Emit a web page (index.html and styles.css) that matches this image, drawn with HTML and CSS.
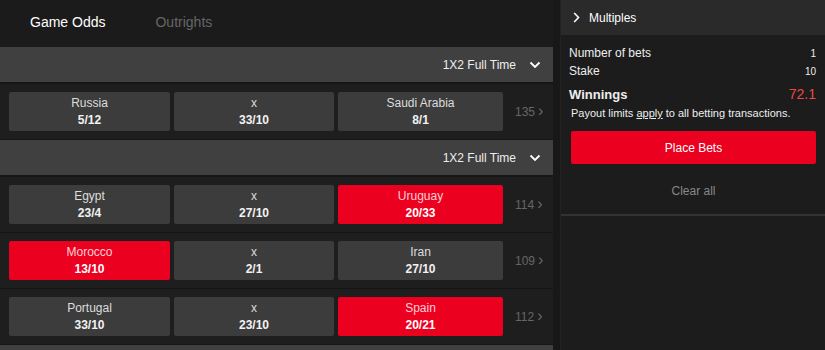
FILE: index.html
```html
<!DOCTYPE html>
<html lang="en">
<head>
    <meta charset="UTF-8">
    <title>Betting</title>
    <link rel="stylesheet" href="styles.css">
</head>
<body>
    <div class="page">
        <div class="markets">
            <div class="tabs">
                <span class="tab active">Game Odds</span>
                <span class="tab">Outrights</span>
            </div>

            <div class="section">
                <div class="section-head">
                    <span>1X2 Full Time</span>
                    <svg class="chev-down" width="12" height="8" viewBox="0 0 12 8"><path d="M1.5 1.5 L6 6 L10.5 1.5" fill="none" stroke="#fff" stroke-width="1.8"/></svg>
                </div>
                <div class="match">
                    <div class="odd"><span class="name">Russia</span><span class="price">5/12</span></div>
                    <div class="odd"><span class="name">x</span><span class="price">33/10</span></div>
                    <div class="odd"><span class="name">Saudi Arabia</span><span class="price">8/1</span></div>
                    <div class="more">135 <span class="arr">&rsaquo;</span></div>
                </div>
            </div>

            <div class="section">
                <div class="section-head">
                    <span>1X2 Full Time</span>
                    <svg class="chev-down" width="12" height="8" viewBox="0 0 12 8"><path d="M1.5 1.5 L6 6 L10.5 1.5" fill="none" stroke="#fff" stroke-width="1.8"/></svg>
                </div>
                <div class="match">
                    <div class="odd"><span class="name">Egypt</span><span class="price">23/4</span></div>
                    <div class="odd"><span class="name">x</span><span class="price">27/10</span></div>
                    <div class="odd selected"><span class="name">Uruguay</span><span class="price">20/33</span></div>
                    <div class="more">114 <span class="arr">&rsaquo;</span></div>
                </div>
                <div class="match">
                    <div class="odd selected"><span class="name">Morocco</span><span class="price">13/10</span></div>
                    <div class="odd"><span class="name">x</span><span class="price">2/1</span></div>
                    <div class="odd"><span class="name">Iran</span><span class="price">27/10</span></div>
                    <div class="more">109 <span class="arr">&rsaquo;</span></div>
                </div>
                <div class="match">
                    <div class="odd"><span class="name">Portugal</span><span class="price">33/10</span></div>
                    <div class="odd"><span class="name">x</span><span class="price">23/10</span></div>
                    <div class="odd selected"><span class="name">Spain</span><span class="price">20/21</span></div>
                    <div class="more">112 <span class="arr">&rsaquo;</span></div>
                </div>
            </div>

            <div class="section">
                <div class="section-head"></div>
            </div>
        </div>

        <div class="betslip">
            <div class="slip-head">
                <svg width="7" height="11" viewBox="0 0 7 11"><path d="M1.2 1 L5.5 5.5 L1.2 10" fill="none" stroke="#fff" stroke-width="1.6"/></svg>
                <span>Multiples</span>
            </div>
            <div class="slip-body">
                <div class="line"><span>Number of bets</span><span class="small">1</span></div>
                <div class="line"><span>Stake</span><span class="small">10</span></div>
                <div class="line win"><span>Winnings</span><span class="amount">72.1</span></div>
                <p class="note">Payout limits <u>apply</u> to all betting transactions.</p>
                <button class="place-btn">Place Bets</button>
                <div class="clear">Clear all</div>
            </div>
        </div>
    </div>
</body>
</html>
```

FILE: styles.css
```css
body {
    margin: 0;
    font-family: 'Liberation Sans', Arial, sans-serif;
    background-color: #181818;
    color: #fff;
}
.page {
    display: flex;
    gap: 7px;
    width: 825px;
    height: 350px;
    overflow: hidden;
}
.markets {
    width: 553px;
    flex-shrink: 0;
}
.tabs {
    height: 47px;
    display: flex;
    align-items: center;
    gap: 50px;
    padding-left: 30px;
    background-color: #1b1b1b;
}
.tab {
    font-size: 14px;
    color: #666;
    padding-bottom: 3px;
}
.tab.active {
    color: #fff;
}
.section {
    background-color: #1e1e1e;
}
.section-head {
    height: 35px;
    display: flex;
    align-items: center;
    justify-content: flex-end;
    gap: 13px;
    padding-right: 12px;
    background-color: #404040;
    border-bottom: 2px solid #161616;
    font-size: 12px;
    color: #eee;
}
.match {
    display: grid;
    grid-template-columns: 161px 160px 165px 1fr;
    gap: 4px;
    padding: 8px 0 8px 9px;
    border-bottom: 1px solid #151515;
}
.odd {
    height: 39px;
    border-radius: 2px;
    background-color: #3c3c3c;
    display: flex;
    flex-direction: column;
    align-items: center;
    justify-content: center;
    gap: 3px;
    font-size: 12px;
}
.odd .name {
    color: #ddd;
}
.odd .price {
    font-weight: bold;
    color: #f2f2f2;
}
.odd.selected {
    background-color: #ec0020;
}
.odd.selected .name {
    color: #fbd0d5;
}
.odd.selected .price {
    color: #fff;
}
.more {
    display: flex;
    align-items: center;
    padding-left: 8px;
    font-size: 12px;
    color: #666;
}
.more .arr {
    font-size: 16px;
    margin-left: 3px;
    margin-top: -2px;
}
.betslip {
    flex-grow: 1;
    background-color: #1c1c1c;
    border-left: 1px solid #222;
}
.slip-head {
    height: 35px;
    display: flex;
    align-items: center;
    gap: 9px;
    padding-left: 12px;
    background-color: #2a2a2a;
    font-size: 12px;
}
.slip-body {
    padding: 9px 10px 0 8px;
}
.line {
    display: flex;
    justify-content: space-between;
    align-items: center;
    height: 18px;
    font-size: 12px;
    color: #eee;
}
.line .small {
    font-size: 10px;
}
.line.win {
    height: 24px;
    margin-top: 2px;
    font-size: 13px;
    font-weight: bold;
}
.line .amount {
    font-size: 14px;
    font-weight: normal;
    color: #ea4a42;
}
.note {
    margin: 1px 0 0 2px;
    font-size: 11px;
    color: #eee;
}
.place-btn {
    display: block;
    width: 245px;
    height: 33px;
    margin: 12px 0 0 2px;
    border: none;
    border-radius: 2px;
    background-color: #ec0020;
    color: #fff;
    font-family: 'Liberation Sans', Arial, sans-serif;
    font-size: 12px;
}
.clear {
    text-align: center;
    padding: 20px 0 16px;
    font-size: 12px;
    color: #888;
    border-bottom: 2px solid #333;
    margin: 0 -10px 0 -8px;
}
```
